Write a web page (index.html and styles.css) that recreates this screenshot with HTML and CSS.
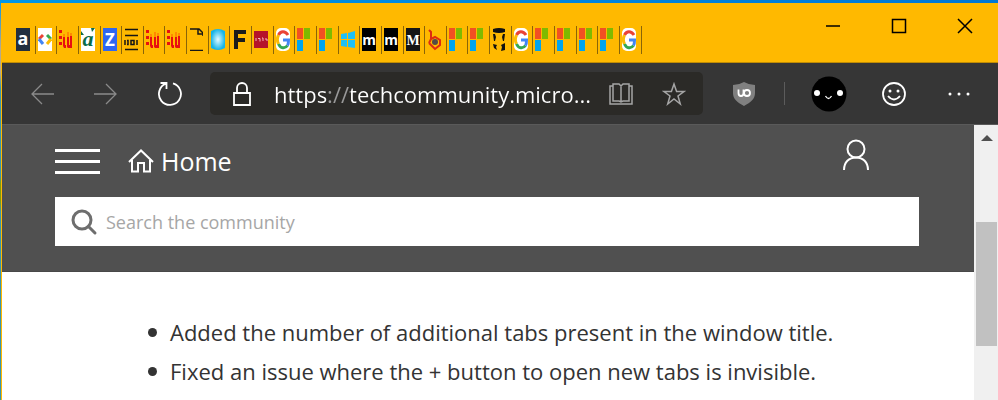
FILE: index.html
```
<!DOCTYPE html>
<html lang="en">
<head>
    <meta charset="UTF-8">
    <meta name="viewport" content="width=device-width, initial-scale=1.0">
    <title>Home</title>
    <link rel="stylesheet" href="styles.css">
</head>
<body>
    <!-- Shared favicons -->
    <svg class="sprites" aria-hidden="true">
        <symbol id="google" viewBox="0 0 14 23">
            <rect width="14" height="23" rx="5" fill="#fff"/>
            <g fill="none" stroke-width="3">
                <path d="M12 7 C9 2.500 4.500 3 2.500 7" stroke="#ea4335"/>
                <path d="M2.500 7 C1 10 1 13 2.500 16" stroke="#fbbc05"/>
                <path d="M2.500 16 C4.500 20.500 9 21 11.500 17.500" stroke="#34a853"/>
                <path d="M11.500 17.500 C12.500 16 12.500 14 12.500 12 H7" stroke="#4285f4"/>
            </g>
        </symbol>
        <symbol id="microsoft" viewBox="0 0 14 23">
            <rect width="6" height="11" fill="#f25022"/>
            <rect x="7" width="6" height="11" fill="#7fba00"/>
            <rect y="12" width="6" height="11" fill="#00a4ef"/>
        </symbol>
        <symbol id="dots" viewBox="0 0 14 23">
            <g fill="#e81010">
                <rect y="2" width="3" height="3"/>
                <rect y="8" width="3" height="3"/>
                <rect y="14" width="3" height="3"/>
                <path d="M4 9h2v8h1v3H5l-1-2zM8 9h2v8h1V8h2v12H9l-1-1z"/>
            </g>
            <path d="M4 6h2v3H4zM8 4h2v5H8zM11 5h2v3h-2z" fill="#ff8a00"/>
        </symbol>
    </svg>

    <div class="window">
        <header class="titlebar">
            <div class="tabs">
                <span class="tab"><svg viewBox="0 0 14 23"><rect width="14" height="23" fill="#232f3e"/><text class="bold" x="7" y="17" font-size="18" fill="#fff">a</text></svg></span>
                <span class="tab"><svg viewBox="0 0 14 23"><rect width="14" height="23" fill="#fff"/><g fill="none" stroke-width="3"><path d="M5 7L1 11" stroke="#ea4335"/><path d="M1 11l4 5" stroke="#4285f4"/><path d="M9 7l4 4" stroke="#34a853"/><path d="M13 11l-4 5" stroke="#fbbc05"/></g></svg></span>
                <span class="tab"><svg><use href="#dots"/></svg></span>
                <span class="tab"><svg viewBox="0 0 14 23"><rect width="14" height="23" fill="#fff"/><path d="M0 3l3 4H0zM10 0h4l-3 4z" fill="#0b6b4b"/><text class="script" x="7" y="18" font-size="22" fill="#0b6b4b">a</text></svg></span>
                <span class="tab"><svg viewBox="0 0 14 23"><rect width="14" height="23" fill="#2f67f0"/><text class="bold" x="7" y="18" font-size="17" fill="#fff">Z</text></svg></span>
                <span class="tab"><svg viewBox="0 0 14 23"><path d="M1 1.500h13M1 7.500h13M1 21.500h13M1 12v5M3 12.500h1v4H3M7 12.500h3v4H7zM13 12v5" stroke="#161616" stroke-width="1.500" fill="none"/></svg></span>
                <span class="tab"><svg><use href="#dots"/></svg></span>
                <span class="tab"><svg><use href="#dots"/></svg></span>
                <span class="tab"><svg viewBox="0 0 14 23"><path d="M1 1h9l4 4v3M9 1v5h5M1 22.500h13" stroke="#161616" stroke-width="1.500" fill="none"/></svg></span>
                <span class="tab"><svg viewBox="0 0 14 23"><defs><radialGradient id="glow"><stop offset="0" stop-color="#e4faff"/><stop offset="1" stop-color="#16b4e8"/></radialGradient></defs><path d="M0 3q7-4 14 0v17q-7 4-14 0z" fill="url(#glow)"/></svg></span>
                <span class="tab"><svg viewBox="0 0 14 23"><path d="M2 2h12v4H6v4h7v4H6v7H2z" fill="#1c1c1c"/></svg></span>
                <span class="tab"><svg viewBox="0 0 14 23"><rect y="3" width="14" height="17" fill="#b5122b"/><path d="M2 10v3M4 10.500h2v3M8 10h1v3M11 11h2v2" stroke="#f0b9bd" fill="none"/></svg></span>
                <span class="tab"><svg><use href="#google"/></svg></span>
                <span class="tab"><svg><use href="#microsoft"/></svg></span>
                <span class="tab"><svg><use href="#microsoft"/></svg></span>
                <span class="tab"><svg viewBox="0 0 14 23"><path d="M0 6l6-1v6H0zM7 5l7-2v8H7zM0 12h6v7l-6-1zM7 12h7v8l-7-1z" fill="#1fc0f5"/></svg></span>
                <span class="tab"><svg viewBox="0 0 14 23"><rect width="14" height="23" fill="#000"/><text class="bold" x="7" y="17" font-size="14" fill="#fff">m</text></svg></span>
                <span class="tab"><svg viewBox="0 0 14 23"><rect width="14" height="23" fill="#000"/><text class="bold" x="7" y="17" font-size="14" fill="#fff">m</text></svg></span>
                <span class="tab"><svg viewBox="0 0 14 23"><rect width="14" height="23" fill="#161616"/><text class="serif" x="7" y="17" font-size="14" fill="#fff">M</text></svg></span>
                <span class="tab"><svg viewBox="0 0 14 23"><path d="M2 2l2 2v7l-2 4M4 11l4-2 5 3v5l-5 4-6-6" stroke="#dd2c10" stroke-width="2" fill="none"/><circle cx="8" cy="14" r="3" fill="#554b45"/></svg></span>
                <span class="tab"><svg><use href="#microsoft"/></svg></span>
                <span class="tab"><svg><use href="#microsoft"/></svg></span>
                <span class="tab"><svg viewBox="0 0 14 23"><path d="M1 1q6-2 12 0v3q-6 2-12 0zM1 6h2l1 3-1 4H2zM13 6h-2l-1 3 1 4h1zM1 16l4 1-1 2 1 3-3-2zM13 15l-4 2 1 2-1 4 4-1z" fill="#111"/></svg></span>
                <span class="tab"><svg><use href="#google"/></svg></span>
                <span class="tab"><svg><use href="#microsoft"/></svg></span>
                <span class="tab"><svg><use href="#microsoft"/></svg></span>
                <span class="tab"><svg><use href="#microsoft"/></svg></span>
                <span class="tab"><svg><use href="#microsoft"/></svg></span>
                <span class="tab"><svg><use href="#google"/></svg></span>
            </div>
            <div class="controls">
                <button class="control" aria-label="Minimize"><svg width="16" height="16" viewBox="0 0 16 16"><path d="M1 8h14"/></svg></button>
                <button class="control" aria-label="Maximize"><svg width="16" height="16" viewBox="0 0 16 16"><path d="M1.500 1.500h13v13h-13z"/></svg></button>
                <button class="control" aria-label="Close"><svg width="16" height="16" viewBox="0 0 16 16"><path d="M1 1l14 14M15 1L1 15"/></svg></button>
            </div>
        </header>

        <nav class="toolbar">
            <button class="tool dim" aria-label="Back"><svg width="24" height="24" viewBox="0 0 24 24"><path d="M24 12H2M12 2L2 12l10 10"/></svg></button>
            <button class="tool dim" aria-label="Forward"><svg width="24" height="24" viewBox="0 0 24 24"><path d="M0 12h22M12 2l10 10-10 10"/></svg></button>
            <button class="tool" aria-label="Refresh"><svg width="26" height="26" viewBox="0 0 26 26"><path class="thick" d="M16 2.400A11 11 0 1 1 9 2.700M3.500 2H9.500V8"/></svg></button>
            <div class="address">
                <svg width="20" height="26" viewBox="0 0 20 26"><path class="thick" d="M2 12h16v12H2zM5 12V7a5 5 0 0 1 10 0v5"/></svg>
                <input class="url" type="text" aria-label="Address" value="https://techcommunity.micro...">
                <button class="inner" aria-label="Reading view"><svg width="24" height="24" viewBox="0 0 24 24"><path d="M12 4v16M4 2h6l2 2 2-2h6v17h-6l-2 1-2-1H4zM4 4H1v18h22V4h-3"/></svg></button>
                <button class="inner" aria-label="Add to favorites"><svg width="24" height="24" viewBox="0 0 24 24"><path d="M12 2l2.600 7.500H22l-6 4.500 2.300 8-6.300-5-6.300 5L8 14 2 9.500h7.400z"/></svg></button>
            </div>
            <button class="tool" aria-label="uBlock"><svg width="24" height="26" viewBox="0 0 24 26"><path class="shield" d="M12 1q5 3 11 3v8c0 6-4 9-11 13C5 21 1 18 1 12V4q6 0 11-3z"/><path class="thick" d="M6.500 8.500v3.500q0 3 2.500 3t2.500-3V8.500"/><circle class="thick" cx="15" cy="12" r="3"/></svg></button>
            <span class="divider"></span>
            <button class="tool" aria-label="Profile"><svg width="36" height="36" viewBox="0 0 36 36"><circle class="face" cx="18" cy="18" r="17.500"/><circle class="dot" cx="6" cy="17" r="3"/><circle class="dot" cx="29" cy="17" r="3"/><path d="M14.500 20q3 5 6 0"/></svg></button>
            <button class="tool" aria-label="Feedback"><svg width="24" height="24" viewBox="0 0 24 24"><circle class="thick" cx="12" cy="12" r="11"/><circle class="dot" cx="8" cy="9" r="1.500"/><circle class="dot" cx="16" cy="9" r="1.500"/><path class="thick" d="M6 14q6 7 12 0"/></svg></button>
            <button class="tool" aria-label="More"><svg width="24" height="24" viewBox="0 0 24 24"><circle class="dot" cx="3" cy="12" r="1.500"/><circle class="dot" cx="12" cy="12" r="1.500"/><circle class="dot" cx="21" cy="12" r="1.500"/></svg></button>
        </nav>

        <div class="viewport">
            <main class="page">
                <div class="site-header">
                    <div class="site-nav">
                        <button class="menu" aria-label="Menu"><span></span><span></span><span></span></button>
                        <a class="home" href="#"><svg width="26" height="24" viewBox="0 0 26 24"><path d="M1 13L13 1.500 25 13M4 11v11.500h6V14h6v8.500h6V11"/></svg>Home</a>
                        <a class="account" href="#" aria-label="Sign in"><svg width="28" height="32" viewBox="0 0 28 32"><circle cx="14" cy="10" r="8.500"/><path d="M2 31c0-8 5-12.500 12-12.500S26 23 26 31"/></svg></a>
                    </div>
                    <label class="search">
                        <svg width="28" height="28" viewBox="0 0 28 28"><circle cx="12" cy="12" r="9"/><path d="M18.500 18.500L25 25"/></svg>
                        <input type="text" placeholder="Search the community" aria-label="Search the community">
                    </label>
                </div>
                <ul class="changes">
                    <li>Added the number of additional tabs present in the window title.</li>
                    <li>Fixed an issue where the + button to open new tabs is invisible.</li>
                </ul>
            </main>
            <div class="scrollbar">
                <svg width="12" height="6" viewBox="0 0 12 6"><path d="M0 6l6-6 6 6z"/></svg>
                <div class="thumb"></div>
            </div>
        </div>
    </div>
</body>
</html>
```

FILE: styles.css
```
* {
    box-sizing: border-box;
}

body {
    margin: 0;
    min-height: 100vh;
    display: flex;
    padding: 3px 0 0 1px;
    background: linear-gradient(to right, #0096e8, #0078d7) top / 100% 3px no-repeat,
        linear-gradient(#0096e8 0, #b5a98e 12%, #b5a98e 18%, #3995ad 22%, #3995ad 44%, #7d9a10 46%, #7d9a10 50%, #3995ad 53%);
    font-family: "Open Sans", "Noto Sans", sans-serif;
}

button {
    border: none;
    padding: 0;
    background: none;
    cursor: pointer;
}

input {
    border: none;
    outline: none;
    padding: 0;
    min-width: 0;
    background: none;
    font-family: inherit;
}

svg {
    display: block;
    flex: none;
}

.sprites {
    display: none;
}

.window {
    flex: 1;
    min-width: 0;
    display: flex;
    flex-direction: column;
    border-left: 1px solid #ffb900;
}

/* Title bar */
.titlebar {
    display: flex;
    justify-content: space-between;
    align-items: flex-start;
    height: 60px;
    background-color: #ffb900;
    border-bottom: 1px solid #c08c05;
}

.tabs {
    display: flex;
    width: 63%;
    margin: 23px 0 0 12px;
}

.tab {
    flex: 1;
    height: 28px;
    padding: 2px 0 0 2px;
    border-right: 1px solid #8a6508;
}

.tab svg {
    width: 14px;
    height: 23px;
}

.tab text {
    text-anchor: middle;
}

.bold {
    font-family: "Open Sans", sans-serif;
    font-weight: bold;
}

.serif {
    font-family: "Liberation Serif", serif;
    font-weight: bold;
}

.script {
    font-family: "Liberation Serif", serif;
    font-style: italic;
    font-weight: bold;
}

.controls {
    display: flex;
}

.control {
    display: flex;
    justify-content: center;
    align-items: center;
    width: 66px;
    height: 46px;
}

.control path {
    fill: none;
    stroke: #000;
    stroke-width: 1.5;
}

/* Toolbar */
.toolbar {
    display: flex;
    align-items: center;
    height: 61px;
    padding: 0 7px 0 8px;
    background-color: #363636;
}

.tool {
    display: flex;
    justify-content: center;
    align-items: center;
    flex: none;
    width: 64px;
    height: 60px;
}

.address ~ .tool {
    width: 65px;
}

.tool path,
.tool circle,
.address path {
    fill: none;
    stroke: #fff;
    stroke-width: 1.3;
}

.dim path {
    stroke: #8a8a8a;
}

.tool .thick,
.address .thick {
    stroke-width: 1.8;
}

.tool .dot {
    fill: #fff;
    stroke: none;
}

.tool .face {
    fill: #000;
    stroke: none;
}

.tool .shield {
    fill: #808080;
    stroke: none;
}

.address {
    display: flex;
    align-items: center;
    flex: 1;
    min-width: 0;
    height: 43px;
    margin: 0 8px;
    padding: 0 3px 0 22px;
    border-radius: 5px;
    background-color: #2b2a27;
}

.url {
    flex: 1;
    height: 40px;
    margin-left: 22px;
    font-size: 22px;
    color: transparent;
    /* the "://" is dimmer than the rest of the address */
    background: linear-gradient(to right, #fff 53px, #999 53px, #999 77px, #fff 77px);
    background-clip: text;
    -webkit-background-clip: text;
    caret-color: #fff;
}

.inner {
    display: flex;
    justify-content: center;
    width: 53px;
}

.inner path {
    stroke: #a5a5a5;
    stroke-width: 1.5;
}

.divider {
    width: 1px;
    height: 23px;
    margin: 0 11px 0 8px;
    background-color: #5c5c5c;
}

/* Page */
.viewport {
    flex: 1;
    display: flex;
    border-top: 1px solid #5a5a5a;
}

.page {
    flex: 1;
    min-width: 0;
    background-color: #fff;
}

.site-header {
    padding: 13px 55px 25px 53px;
    background-color: #505050;
    border-bottom: 1px solid #484848;
}

.site-nav {
    display: flex;
    align-items: center;
    height: 46px;
}

.menu {
    display: flex;
    flex-direction: column;
    gap: 8px;
    width: 45px;
}

.menu span {
    height: 3px;
    background-color: #fff;
}

.home {
    display: flex;
    align-items: center;
    gap: 7px;
    margin-left: 28px;
    color: #fff;
    font-size: 25px;
    text-decoration: none;
}

.home path,
.account path,
.account circle {
    fill: none;
    stroke: #fff;
    stroke-width: 2;
}

.account {
    align-self: flex-start;
    margin: 1px 49px 0 auto;
}

.search {
    display: flex;
    align-items: center;
    gap: 8px;
    height: 49px;
    margin-top: 13px;
    padding: 0 15px;
    background-color: #fff;
}

.search path,
.search circle {
    fill: none;
    stroke: #6e6e6e;
    stroke-width: 3;
    stroke-linecap: round;
}

.search input {
    flex: 1;
    font-size: 18px;
}

.search input::placeholder {
    color: #a6a6a6;
}

.changes {
    margin: 41px 0 0;
    padding: 0 20px 0 146px;
    list-style: none;
    color: #333;
    font-size: 22px;
    line-height: 39px;
}

.changes li {
    display: flex;
    align-items: center;
    gap: 13px;
}

.changes li::before {
    content: "";
    flex: none;
    width: 9px;
    height: 9px;
    border-radius: 50%;
    background-color: #333;
}

.scrollbar {
    display: flex;
    flex-direction: column;
    align-items: center;
    width: 24px;
    padding: 10px 1px 0 2px;
    background-color: #f0f0f0;
}

.scrollbar path {
    fill: #505050;
}

.thumb {
    width: 100%;
    height: 124px;
    margin-top: 81px;
    background-color: #c1c1c1;
}
```
